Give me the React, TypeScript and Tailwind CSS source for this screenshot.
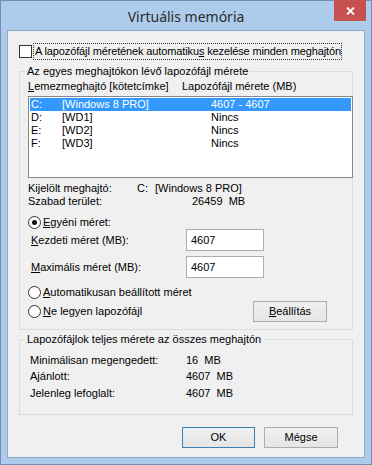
const drives = [
  { letter: 'C:', label: '[Windows 8 PRO]', size: '4607 - 4607', selected: true },
  { letter: 'D:', label: '[WD1]', size: 'Nincs' },
  { letter: 'E:', label: '[WD2]', size: 'Nincs' },
  { letter: 'F:', label: '[WD3]', size: 'Nincs' },
]

function Radio({ checked }: { checked?: boolean }) {
  return (
    <span className="w-[13px] h-[13px] shrink-0 rounded-full border border-[#333] bg-white flex items-center justify-center">
      {checked && <span className="w-[5px] h-[5px] rounded-full bg-[#111]" />}
    </span>
  )
}

function Button({ children, primary, className }: { children: React.ReactNode; primary?: boolean; className?: string }) {
  return (
    <button
      className={`h-[21px] flex items-center justify-center border bg-linear-to-b from-[#f0f0f0] to-[#e5e5e5] text-black ${
        primary ? 'border-[#3c7fb1]' : 'border-[#acacac]'
      } ${className ?? ''}`}
    >
      {children}
    </button>
  )
}

export default function App() {
  return (
    <div className="w-[372px] h-[465px] border border-[#6f8fb5] bg-[#adcbea] flex flex-col font-['Liberation_Sans',Arial,sans-serif] text-[11px] leading-[13px] text-black whitespace-nowrap">
      {/* címsor */}
      <div className="relative h-[29px] flex items-center justify-center shrink-0">
        <span className="text-[14px] text-[#2b2b2b] font-['Noto_Sans',sans-serif] pt-[1px]">Virtuális memória</span>
        <div className="absolute -top-[1px] right-[5px] w-[32px] h-[21px] bg-[#c75050] flex items-center justify-center">
          <svg width="9" height="8" viewBox="0 0 9 8">
            <path d="M1 0.5 L8 7.5 M8 0.5 L1 7.5" stroke="white" strokeWidth="1.8" />
          </svg>
        </div>
      </div>

      {/* ügyfélterület */}
      <div className="mx-[6px] h-[428px] border border-[#8ea9c7] bg-[#f0f0f0] flex flex-col">
        <div className="mt-[12px] ml-[11px] h-[17px] flex items-center">
          <span className="w-[13px] h-[13px] border border-[#333] bg-white" />
          <span className="ml-[1px] h-[17px] px-[1px] block leading-[15px] tracking-[-0.13px] border border-dotted border-[#333] w-[309px]">
            A lapozófájl méretének automatiku<u>s</u> kezelése minden meghajtón
          </span>
        </div>

        <fieldset className="mt-[4px] ml-[11px] w-[334px] border border-[#dcdcdc] pl-[8px] pb-[7px]">
          <legend className="-ml-[3px] px-[2px] leading-[14px]">Az egyes meghajtókon lévő lapozófájl mérete</legend>
          <div className="mt-[1px] h-[14px] flex items-center">
            <span className="w-[154px]">
              <u>L</u>emezmeghajtó [kötetcímke]
            </span>
            <span>Lapozófájl mérete (MB)</span>
          </div>
          <div className="mt-[3px] -mr-[1px] h-[82px] border border-[#828790] bg-white p-[1px]">
            {drives.map((d) => (
              <div
                key={d.letter}
                className={`h-[13px] flex items-center pl-[1px] ${d.selected ? 'bg-[#3399ff] text-white' : ''}`}
              >
                <span className="w-[31px]">{d.letter}</span>
                <span className="w-[149px]">{d.label}</span>
                <span>{d.size}</span>
              </div>
            ))}
          </div>

          <div className="mt-[4px] h-[13px] flex items-center">
            <span className="w-[109px]">Kijelölt meghajtó:</span>
            <span className="w-[18px]">C:</span>
            <span>[Windows 8 PRO]</span>
          </div>
          <div className="h-[13px] flex items-center">
            <span className="w-[164px]">Szabad terület:</span>
            <span>26459&nbsp; MB</span>
          </div>

          <div className="mt-[8px] h-[13px] flex items-center gap-[2px]">
            <Radio checked />
            <span>
              <u>E</u>gyéni méret:
            </span>
          </div>
          <div className="h-[22px] flex items-center">
            <span className="ml-[3px] w-[155px]">
              <u>K</u>ezdeti méret (MB):
            </span>
            <span className="w-[78px] h-[22px] border border-[#abadb3] bg-white flex items-center pl-[4px]">4607</span>
          </div>
          <div className="mt-[5px] h-[22px] flex items-center">
            <span className="ml-[3px] w-[155px]">
              <u>M</u>aximális méret (MB):
            </span>
            <span className="w-[78px] h-[22px] border border-[#abadb3] bg-white flex items-center pl-[4px]">4607</span>
          </div>

          <div className="mt-[8px] h-[13px] flex items-center gap-[2px]">
            <Radio />
            <span>
              <u>A</u>utomatikusan beállított méret
            </span>
          </div>
          <div className="mt-[1px] h-[22px] flex items-center">
            <Radio />
            <span className="ml-[2px]">
              <u>N</u>e legyen lapozófájl
            </span>
            <Button className="ml-auto mr-[25px] w-[74px]">
              <span>
                <u>B</u>eállítás
              </span>
            </Button>
          </div>
        </fieldset>

        <fieldset className="mt-[2px] ml-[11px] w-[334px] border border-[#dcdcdc] pl-[10px] pt-[6px] pb-[13px]">
          <legend className="-ml-[5px] px-[2px] leading-[14px]">Lapozófájlok teljes mérete az összes meghajtón</legend>
          <div className="h-[16px] flex items-center">
            <span className="w-[156px]">Minimálisan megengedett:</span>
            <span>16&nbsp; MB</span>
          </div>
          <div className="h-[17px] flex items-center">
            <span className="w-[156px]">Ajánlott:</span>
            <span>4607&nbsp; MB</span>
          </div>
          <div className="h-[16px] flex items-center">
            <span className="w-[156px]">Jelenleg lefoglalt:</span>
            <span>4607&nbsp; MB</span>
          </div>
        </fieldset>

        <div className="mt-[12px] flex justify-end gap-[9px] pr-[26px]">
          <Button primary className="w-[73px] h-[20px]">
            OK
          </Button>
          <Button className="w-[74px] h-[20px]">Mégse</Button>
        </div>
      </div>
    </div>
  )
}
